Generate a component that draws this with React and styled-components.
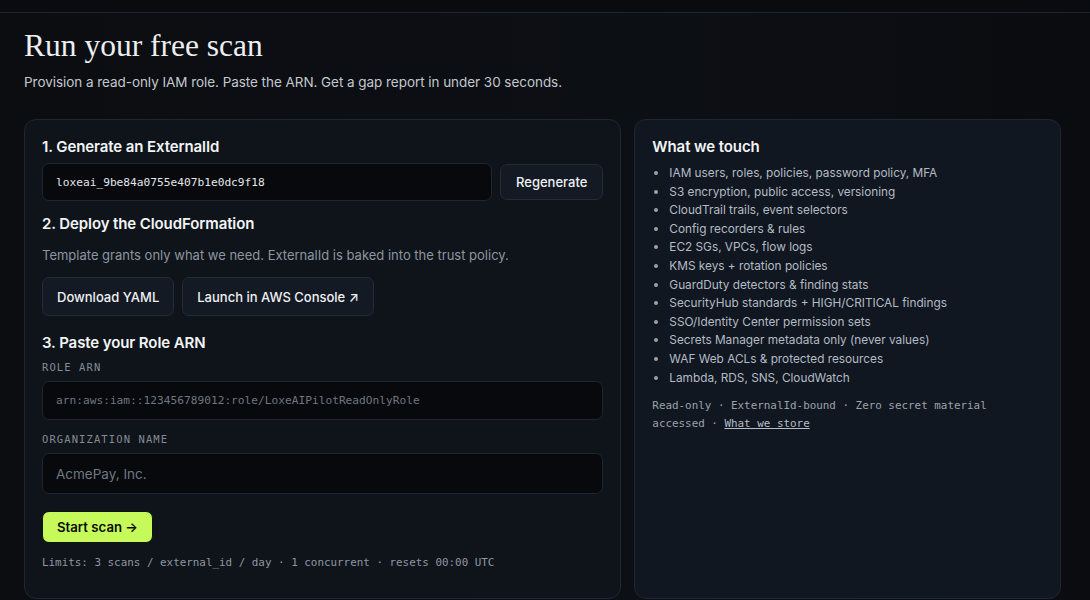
import React from "react";
import styled, { createGlobalStyle } from "styled-components";

const Global = createGlobalStyle`
  html, body { margin: 0; padding: 0; background: #0a0c10; }
  body { font-family: Inter, "Noto Sans", sans-serif; color: #e8eaee; -webkit-font-smoothing: antialiased; }
  * { box-sizing: border-box; }
`;

const Page = styled.div`
  min-height: 600px;
  background: linear-gradient(90deg, #0b0d11 0%, #0c0f14 60%, #0a0c10 100%);
`;

const TopBar = styled.div`
  height: 13px;
  background: #090b0f;
  border-bottom: 1px solid #1c2632;
`;

const Main = styled.main`
  padding: 0 29px 0 24px;
`;

const Title = styled.h1`
  margin: 14px 0 0;
  font-family: "Liberation Serif", "DejaVu Serif", serif;
  font-weight: 400;
  font-size: 31.5px;
  line-height: 38px;
  color: #eceef1;
`;

const Subtitle = styled.p`
  margin: 7px 0 0;
  font-size: 13.5px;
  line-height: 20px;
  color: #c3c8ce;
  letter-spacing: -0.05px;
`;

const Grid = styled.div`
  margin-top: 27px;
  display: grid;
  grid-template-columns: 1.4fr 1fr;
  gap: 13px;
`;

const Card = styled.section`
  background: ${(p) => (p.$alt ? "#111720" : "#0f141b")};
  border: 1px solid #1f2733;
  border-radius: 12px;
  padding: 17px 17px 26px;
  height: 480px;
  display: flex;
  flex-direction: column;
`;

const StepTitle = styled.h2`
  margin: ${(p) => p.$mt || 0}px 0 0;
  font-size: 15px;
  line-height: 20px;
  font-weight: 600;
  color: #f2f4f6;
  letter-spacing: -0.1px;
`;

const Row = styled.div`
  display: flex;
  align-items: center;
  gap: 8px;
  margin-top: ${(p) => p.$mt || 0}px;
`;

const Field = styled.div`
  flex: ${(p) => (p.$grow ? 1 : "none")};
  height: ${(p) => p.$h || 39}px;
  display: flex;
  align-items: center;
  padding: 0 13px;
  background: #07090c;
  border: 1px solid #1f2631;
  border-radius: 7px;
  font-family: ${(p) =>
    p.$mono ? '"DejaVu Sans Mono", "Liberation Mono", monospace' : 'Inter, "Noto Sans", sans-serif'};
  font-size: ${(p) => (p.$mono ? "11.2px" : "13.5px")};
  color: ${(p) => (p.$placeholder ? "#6f7782" : "#e4e7eb")};
  margin-top: ${(p) => p.$mt || 0}px;
`;

const Button = styled.button`
  height: ${(p) => p.$h || 39}px;
  padding: 0 ${(p) => p.$px || 14}px;
  background: #141a23;
  border: 1px solid #232c38;
  border-radius: 7px;
  color: #eef0f3;
  font-family: Inter, "Noto Sans", sans-serif;
  font-size: 13px;
  font-weight: 500;
  cursor: pointer;
  white-space: nowrap;
`;

const PrimaryButton = styled.button`
  align-self: flex-start;
  margin-top: 17px;
  height: 33px;
  padding: 0 14px;
  background: #c6f95a;
  border: 1px solid #0f1400;
  border-radius: 7px;
  color: #0a0d06;
  font-family: Inter, "Noto Sans", sans-serif;
  font-size: 13.2px;
  font-weight: 600;
  cursor: pointer;
`;

const Desc = styled.p`
  margin: 11px 0 0;
  font-size: 13px;
  line-height: 20px;
  color: #8d959f;
`;

const Label = styled.div`
  margin-top: ${(p) => p.$mt || 0}px;
  font-family: "DejaVu Sans Mono", "Liberation Mono", monospace;
  font-size: 10.5px;
  line-height: 16px;
  letter-spacing: 1.1px;
  color: #838b95;
`;

const Mono = styled.p`
  margin: ${(p) => p.$mt || 0}px 0 0;
  font-family: "DejaVu Sans Mono", "Liberation Mono", monospace;
  font-size: 10.9px;
  line-height: 18px;
  color: ${(p) => p.$color || "#8e96a0"};
`;

const List = styled.ul`
  margin: 7px 0 0;
  padding-left: 17px;
  font-size: 11.8px;
  line-height: 18.6px;
  color: #b3bbc5;
  li::marker { font-size: 12.5px; color: #9aa2ac; }
`;

const Link = styled.a`
  color: #b5bdc6;
  text-decoration: underline;
  text-underline-offset: 1px;
`;

const items = [
  "IAM users, roles, policies, password policy, MFA",
  "S3 encryption, public access, versioning",
  "CloudTrail trails, event selectors",
  "Config recorders & rules",
  "EC2 SGs, VPCs, flow logs",
  "KMS keys + rotation policies",
  "GuardDuty detectors & finding stats",
  "SecurityHub standards + HIGH/CRITICAL findings",
  "SSO/Identity Center permission sets",
  "Secrets Manager metadata only (never values)",
  "WAF Web ACLs & protected resources",
  "Lambda, RDS, SNS, CloudWatch",
];

export default function App() {
  return (
    <Page>
      <Global />
      <TopBar />
      <Main>
        <Title>Run your free scan</Title>
        <Subtitle>Provision a read-only IAM role. Paste the ARN. Get a gap report in under 30 seconds.</Subtitle>
        <Grid>
          <Card>
            <StepTitle>1. Generate an ExternalId</StepTitle>
            <Row $mt={6}>
              <Field $grow $mono $h={38}>loxeai_9be84a0755e407b1e0dc9f18</Field>
              <Button $h={36} $px={15}>Regenerate</Button>
            </Row>
            <StepTitle $mt={13}>2. Deploy the CloudFormation</StepTitle>
            <Desc>Template grants only what we need. ExternalId is baked into the trust policy.</Desc>
            <Row $mt={12}>
              <Button>Download YAML</Button>
              <Button>Launch in AWS Console ↗</Button>
            </Row>
            <StepTitle $mt={17}>3. Paste your Role ARN</StepTitle>
            <Label $mt={6}>ROLE ARN</Label>
            <Field $mono $placeholder $mt={6}>
              arn:aws:iam::123456789012:role/LoxeAIPilotReadOnlyRole
            </Field>
            <Label $mt={11}>ORGANIZATION NAME</Label>
            <Field $placeholder $mt={6} $h={41}>
              AcmePay, Inc.
            </Field>
            <PrimaryButton>Start scan →</PrimaryButton>
            <Mono $mt={11}>Limits: 3 scans / external_id / day · 1 concurrent · resets 00:00 UTC</Mono>
          </Card>
          <Card $alt>
            <StepTitle>What we touch</StepTitle>
            <List>
              {items.map((t) => (
                <li key={t}>{t}</li>
              ))}
            </List>
            <Mono $mt={10} $color="#9aa2ab">
              Read-only · ExternalId-bound · Zero secret material accessed · <Link>What we store</Link>
            </Mono>
          </Card>
        </Grid>
      </Main>
    </Page>
  );
}
